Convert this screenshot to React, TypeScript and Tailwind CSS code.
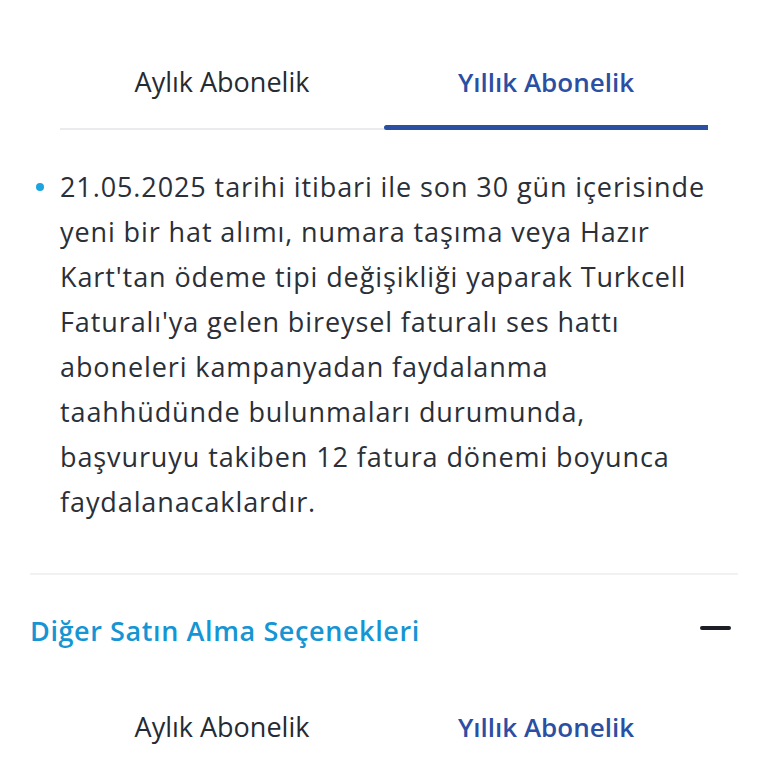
import { useState } from "react";

const TABS = ["Aylık Abonelik", "Yıllık Abonelik"];

const LINES = [
  "21.05.2025 tarihi itibari ile son 30 gün içerisinde",
  "yeni bir hat alımı, numara taşıma veya Hazır",
  "Kart'tan ödeme tipi değişikliği yaparak Turkcell",
  "Faturalı'ya gelen bireysel faturalı ses hattı",
  "aboneleri kampanyadan faydalanma",
  "taahhüdünde bulunmaları durumunda,",
  "başvuruyu takiben 12 fatura dönemi boyunca",
  "faydalanacaklardır.",
];

function PlanTabs({ active, onChange }: { active: number; onChange: (i: number) => void }) {
  return (
    <div className="relative mx-[60px] flex">
      <div className="absolute inset-x-0 bottom-0 h-[2px] bg-[#e9ebee]" />
      {TABS.map((t, i) => (
        <button
          key={t}
          type="button"
          onClick={() => onChange(i)}
          className={
            "relative flex h-[86px] flex-1 items-start justify-center pt-[20px] leading-[36px] " +
            (i === active ? "text-[26px] font-semibold text-[#2a4fa3]" : "text-[27px] text-[#262b33]")
          }
        >
          {t}
          {i === active && (
            <span className="absolute inset-x-0 bottom-0 h-[5px] rounded-l-full bg-[#2a4fa3]" />
          )}
        </button>
      ))}
    </div>
  );
}

export default function App() {
  const [tab, setTab] = useState(1);
  const [tab2, setTab2] = useState(1);
  const [open, setOpen] = useState(true);

  return (
    <div className="min-h-[768px] overflow-hidden bg-white font-['Open_Sans',sans-serif]">
      <div className="pt-[44px]">
        <PlanTabs active={tab} onChange={setTab} />
      </div>

      <ul className="ml-[36px] mt-[34px] pb-[49px]">
        <li className="flex gap-[16px]">
          <span className="mt-[19px] h-[8px] w-[8px] shrink-0 rounded-full bg-[#1ba4e0]" />
          <p className="text-[27px] leading-[45px] tracking-[0.9px] text-[#2a2f38]">
            {LINES.map((l) => (
              <span key={l} className="block whitespace-nowrap">
                {l}
              </span>
            ))}
          </p>
        </li>
      </ul>

      <div className="mx-[30px] border-t-2 border-[#f0f1f3]">
        <button
          type="button"
          onClick={() => setOpen(!open)}
          className="flex w-full items-center justify-between pb-[40px] pt-[38px]"
        >
          <span className="text-[27px] font-semibold leading-[36px] tracking-[0.6px] text-[#1595d3]">
            Diğer Satın Alma Seçenekleri
          </span>
          <span className="relative -top-[3px] mr-[7px] block h-[4px] w-[31px] rounded-full bg-[#1b1e24]" />
        </button>
      </div>

      {open && <PlanTabs active={tab2} onChange={setTab2} />}
    </div>
  );
}
